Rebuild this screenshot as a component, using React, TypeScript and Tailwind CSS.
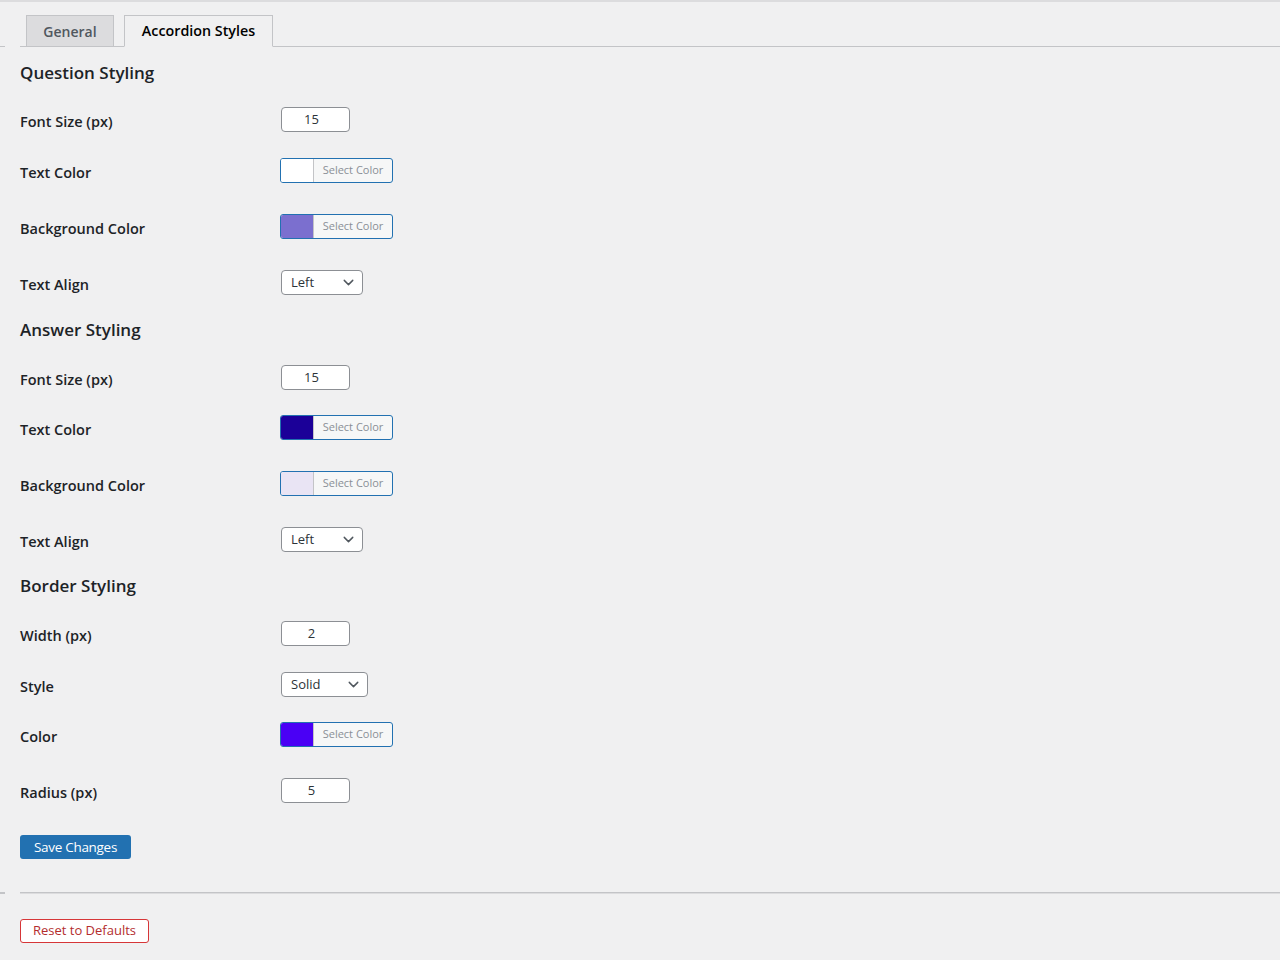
import { ChevronDown } from "lucide-react";

type Row =
  | { kind: "heading"; text: string; h: number }
  | { kind: "number"; label: string; value: string; h: number }
  | { kind: "color"; label: string; color: string; h: number }
  | { kind: "select"; label: string; value: string; wide?: boolean; h: number };

const rows: Row[] = [
  { kind: "heading", text: "Question Styling", h: 48 },
  { kind: "number", label: "Font Size (px)", value: "15", h: 51 },
  { kind: "color", label: "Text Color", color: "#ffffff", h: 56 },
  { kind: "color", label: "Background Color", color: "#7b6fcf", h: 56 },
  { kind: "select", label: "Text Align", value: "Left", h: 46 },
  { kind: "heading", text: "Answer Styling", h: 49 },
  { kind: "number", label: "Font Size (px)", value: "15", h: 50 },
  { kind: "color", label: "Text Color", color: "#1b0098", h: 56 },
  { kind: "color", label: "Background Color", color: "#e9e4f4", h: 56 },
  { kind: "select", label: "Text Align", value: "Left", h: 45 },
  { kind: "heading", text: "Border Styling", h: 49 },
  { kind: "number", label: "Width (px)", value: "2", h: 51 },
  { kind: "select", label: "Style", value: "Solid", wide: true, h: 50 },
  { kind: "color", label: "Color", color: "#4a00f5", h: 56 },
  { kind: "number", label: "Radius (px)", value: "5", h: 54 },
];

function NumberInput({ value }: { value: string }) {
  return (
    <div className="mb-[3px] ml-px flex h-[25px] w-[69px] items-center justify-center rounded-[4px] border border-[#8c8f94] bg-white pr-[8px] text-[13px] text-[#2c3338]">
      {value}
    </div>
  );
}

function ColorPicker({ color }: { color: string }) {
  return (
    <div className="mb-[3px] flex h-[25px] w-[113px] overflow-hidden rounded-[3px] border border-[#2271b1] bg-[#f6f7f7]">
      <div className="w-[33px] border-r border-[#c3c4c7]" style={{ backgroundColor: color }} />
      <div className="flex flex-1 items-center justify-center text-[11px] text-[#8a8f96]">
        Select Color
      </div>
    </div>
  );
}

function SelectBox({ value, wide }: { value: string; wide?: boolean }) {
  return (
    <div
      className={`mb-[3px] ml-px flex h-[25px] items-center justify-between rounded-[4px] border border-[#8c8f94] bg-white pl-[9px] pr-[5px] text-[13px] text-[#2c3338] ${
        wide ? "w-[87px]" : "w-[82px]"
      }`}
    >
      <span>{value}</span>
      <ChevronDown size={17} strokeWidth={2} className="text-[#50575e]" />
    </div>
  );
}

export default function App() {
  return (
    <div
      className="min-h-[960px] bg-[#f0f0f1] text-[#1d2327]"
      style={{ fontFamily: '"Open Sans", "Noto Sans", sans-serif' }}
    >
      <div className="h-[2px] bg-[#dcdcde]" />
      <div className="relative pt-[13px]">
        <div className="absolute bottom-0 left-0 h-px w-[5px] bg-[#c3c4c7]" />
        <div className="ml-[20px] flex items-end gap-[10px] border-b border-[#c3c4c7] pl-[6px]">
          <div className="-mb-px flex h-[32px] w-[88px] items-center justify-center border border-[#c3c4c7] bg-[#dcdcde] text-[14px] font-semibold text-[#50575e]">
            General
          </div>
          <div className="-mb-px flex h-[32px] w-[149px] items-center justify-center border border-b-[#f0f0f1] border-[#c3c4c7] bg-[#f0f0f1] text-[14.3px] font-semibold text-black">
            Accordion Styles
          </div>
        </div>
      </div>

      <div className="pl-[20px] pt-[12px]">
        {rows.map((row, i) => (
          <div key={i} style={{ height: row.h }}>
            {row.kind === "heading" ? (
              <div className="flex h-[28px] items-center text-[17px] font-semibold">{row.text}</div>
            ) : (
              <div className="flex h-[28px] items-center">
                <div className="w-[260px] pt-[1px] text-[14.5px] font-semibold">{row.label}</div>
                {row.kind === "number" && <NumberInput value={row.value} />}
                {row.kind === "color" && <ColorPicker color={row.color} />}
                {row.kind === "select" && <SelectBox value={row.value} wide={row.wide} />}
              </div>
            )}
          </div>
        ))}

        <div className="mt-[2px]">
          <button className="h-[24px] w-[111px] rounded-[3px] bg-[#2271b1] text-[13.5px] tracking-[-0.3px] text-white">
            Save Changes
          </button>
        </div>
      </div>

      <div className="relative mt-[33px]">
        <div className="absolute left-0 top-0 h-[2px] w-[5px] bg-[#c3c4c7]" />
        <div className="ml-[20px] h-[2px] border-t border-[#c3c4c7] border-b-[#f6f7f7] bg-[#dcdcde]" />
      </div>

      <div className="pl-[20px] pt-[23px]">
        <button className="h-[24px] w-[129px] rounded-[3px] border border-[#d63638] bg-white text-[13px] text-[#b32d2e]">
          Reset to Defaults
        </button>
      </div>
    </div>
  );
}
